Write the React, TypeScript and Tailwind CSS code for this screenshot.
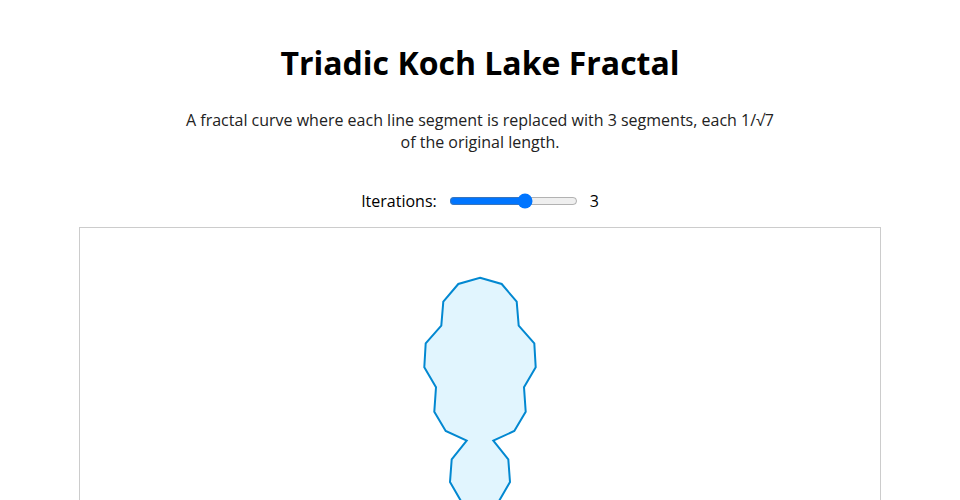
import { useState } from "react";

// right half of the lake outline, page coords, top -> bottom (left half is mirrored)
const half: [number, number][] = [
  [480, 277.7],
  [501.7, 284],
  [516.7, 301.7],
  [518.7, 325.7],
  [534.3, 343.3],
  [535.7, 367.3],
  [524, 387.3],
  [525.7, 411.7],
  [514.3, 431],
  [493.3, 440.7],
  [508.3, 459.3],
  [510, 482],
  [498.3, 502.3],
  [500, 526],
  [488, 546],
  [480, 552],
];

function lakePoints() {
  const right = half.map(([x, y]) => [x - 80, y - 228]);
  const left = [...half]
    .reverse()
    .slice(1, -1)
    .map(([x, y]) => [960 - x - 80, y - 228]);
  return [...right, ...left].map((p) => p.join(",")).join(" ");
}

export default function App() {
  const [iter, setIter] = useState(3);

  return (
    <div
      className="flex flex-col items-center bg-white text-black"
      style={{ fontFamily: '"Open Sans", sans-serif' }}
    >
      <h1 className="mt-[44px] text-[32px] font-bold leading-[38px]">
        Triadic Koch Lake Fractal
      </h1>
      <p className="mt-[27px] max-w-[600px] text-center text-base leading-[22px] text-[#222]">
        A fractal curve where each line segment is replaced with 3 segments,
        each 1/√7 of the original length.
      </p>
      <div className="mt-[36px] flex items-center gap-3 text-base">
        <label htmlFor="iter">Iterations:</label>
        <input
          id="iter"
          type="range"
          min={0}
          max={5}
          value={iter}
          onChange={(e) => setIter(Number(e.target.value))}
        />
        <span>{iter}</span>
      </div>
      <div className="mt-[14px] h-[500px] w-[802px] border border-[#ccc] bg-white">
        <svg width="800" height="498" viewBox="0 0 800 498">
          <polygon
            points={lakePoints()}
            fill="#e1f5fe"
            stroke="#0288d1"
            strokeWidth="2"
            strokeLinejoin="miter"
          />
        </svg>
      </div>
    </div>
  );
}
